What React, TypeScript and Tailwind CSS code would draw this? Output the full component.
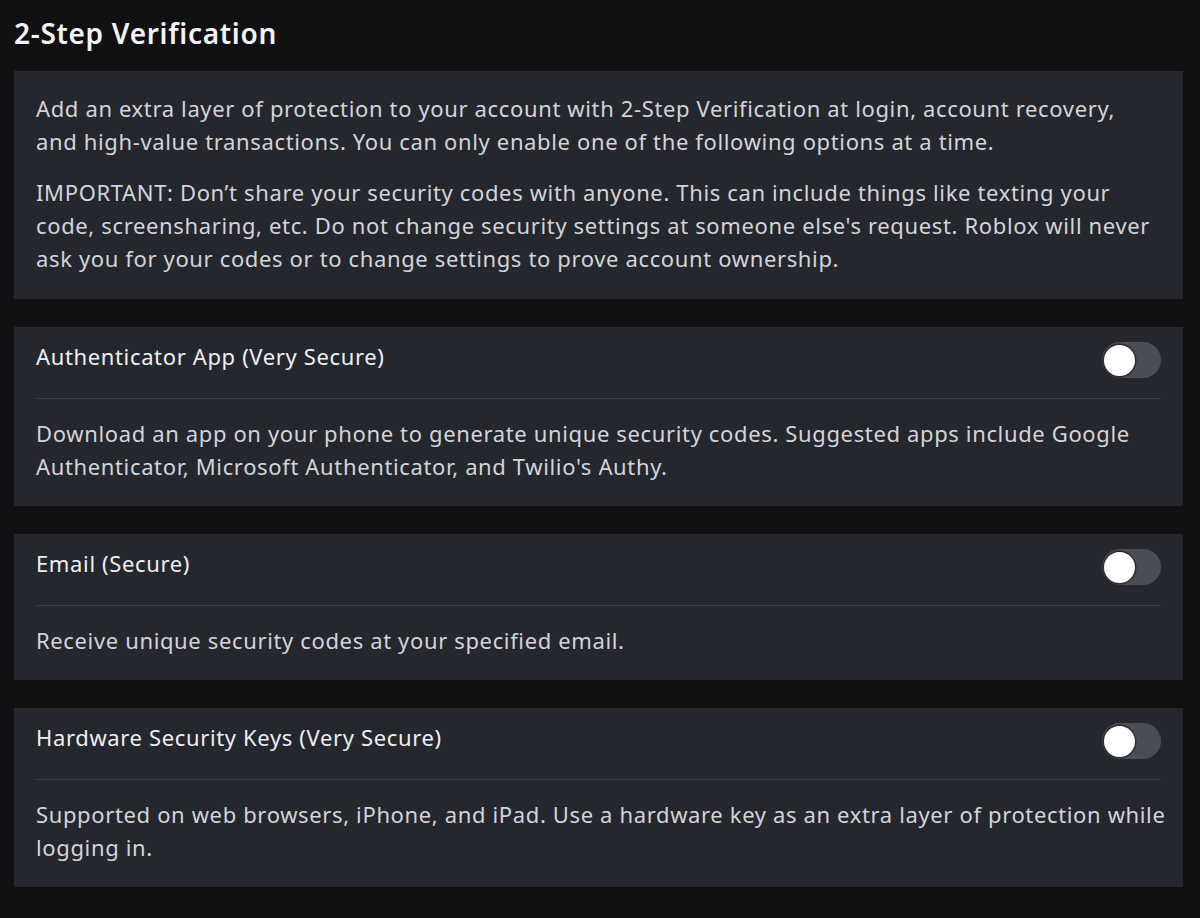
import React from "react";

function Toggle() {
  return (
    <div className="relative h-[36px] w-[59px] shrink-0 rounded-full bg-[#4a4c58]">
      <div className="absolute left-[2px] top-[2.5px] h-[31px] w-[31px] rounded-full bg-white shadow-[0_0_0_1.5px_rgba(20,20,25,0.6)]" />
    </div>
  );
}

function OptionCard({ title, lines }: { title: string; lines: string[] }) {
  return (
    <div className="bg-[#25272e] px-[22px] pb-[23px]">
      <div className="flex items-start justify-between pt-[15px] pb-[20px]">
        <div className="-mt-[2px] text-[#eeeff1] leading-[33px]">{title}</div>
        <Toggle />
      </div>
      <div className="h-px bg-[#3c3e46]" />
      <p className="mt-[18px] text-[#d3d4d8]">
        {lines.map((l, i) => (
          <span key={i} className="block whitespace-nowrap">{l}</span>
        ))}
      </p>
    </div>
  );
}

export default function App() {
  return (
    <div
      className="min-h-[918px] w-[1200px] bg-[#111114] pl-[14px] pr-[17px] text-[22px] leading-[33px] tracking-[0.64px]"
      style={{ fontFamily: "'Noto Sans', sans-serif" }}
    >
      <h1 className="pt-[14px] pb-[19px] text-[28px] font-semibold leading-[38px] tracking-[0.7px] text-[#f4f4f6]">
        2-Step Verification
      </h1>
      <div className="flex flex-col gap-[28px]">
        <div className="bg-[#25272e] px-[22px] pt-[21px] pb-[24px] text-[#d3d4d8]">
          <p>
            <span className="block whitespace-nowrap">Add an extra layer of protection to your account with 2-Step Verification at login, account recovery,</span>
            <span className="block whitespace-nowrap">and high-value transactions. You can only enable one of the following options at a time.</span>
          </p>
          <p className="mt-[18px]">
            <span className="block whitespace-nowrap">IMPORTANT: Don’t share your security codes with anyone. This can include things like texting your</span>
            <span className="block whitespace-nowrap">code, screensharing, etc. Do not change security settings at someone else's request. Roblox will never</span>
            <span className="block whitespace-nowrap">ask you for your codes or to change settings to prove account ownership.</span>
          </p>
        </div>
        <OptionCard
          title="Authenticator App (Very Secure)"
          lines={[
            "Download an app on your phone to generate unique security codes. Suggested apps include Google",
            "Authenticator, Microsoft Authenticator, and Twilio's Authy.",
          ]}
        />
        <OptionCard title="Email (Secure)" lines={["Receive unique security codes at your specified email."]} />
        <OptionCard
          title="Hardware Security Keys (Very Secure)"
          lines={[
            "Supported on web browsers, iPhone, and iPad. Use a hardware key as an extra layer of protection while",
            "logging in.",
          ]}
        />
      </div>
    </div>
  );
}
